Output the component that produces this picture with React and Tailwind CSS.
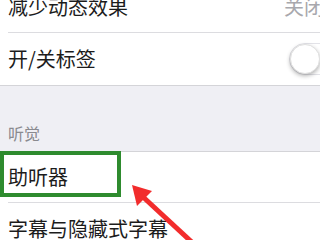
export default function App() {
  const font = { fontFamily: '"Noto Sans CJK SC", "Noto Sans", sans-serif' };
  return (
    <div className="relative w-[320px] h-[240px] overflow-hidden bg-white" style={font}>
      <div className="mt-[-19px]">
        {/* Row 1 */}
        <div className="h-[52px] pl-2 bg-white">
          <div className="h-full flex items-center justify-between border-b border-[#dcdce0]">
            <span className="text-[20px] text-[#1c1c1c] leading-none">减少动态效果</span>
            <span className="text-[20px] text-[#a8a8ad] leading-none mr-[-4px]">关闭</span>
          </div>
        </div>
        {/* Row 2 */}
        <div className="h-[53px] pl-2 bg-white border-b border-[#d4d4d8] flex items-center justify-between">
          <span className="text-[20px] text-[#1c1c1c] leading-none">开/关标签</span>
          <div className="w-[52px] h-[32px] mr-[-21px] rounded-full border border-[#e3e3e8] bg-white relative">
            <div className="absolute left-0 top-0 w-[30px] h-[30px] rounded-full bg-white shadow-[0_2px_4px_rgba(0,0,0,0.3)] border border-[#e0e0e0]"></div>
          </div>
        </div>
        {/* Section header */}
        <div className="h-[65px] bg-[#efeff4] pl-2 flex items-end pb-[10px]">
          <span className="text-[16px] text-[#8a8a8f] leading-none">听觉</span>
        </div>
        {/* Row 3 */}
        <div className="relative h-[52px] pl-2 bg-white border-t border-[#d4d4d8]">
          <div className="h-full flex items-center border-b border-[#dcdce0]">
            <span className="text-[20px] text-[#1c1c1c] leading-none">助听器</span>
          </div>
          <div className="absolute left-0 top-[-1px] w-[121px] h-[46px] border-4 border-[#2e8b2e]"></div>
        </div>
        {/* Row 4 */}
        <div className="h-[52px] pl-2 bg-white">
          <div className="h-full flex items-center">
            <span className="text-[20px] text-[#1c1c1c] leading-none">字幕与隐藏式字幕</span>
          </div>
        </div>
      </div>
      <svg className="absolute left-0 top-0" width="320" height="240" viewBox="0 0 320 240">
        <line x1="196" y1="246" x2="142" y2="196" stroke="#f22c2c" strokeWidth="5" />
        <polygon points="132,185 137,206 152,191" fill="#f22c2c" />
      </svg>
    </div>
  );
}
